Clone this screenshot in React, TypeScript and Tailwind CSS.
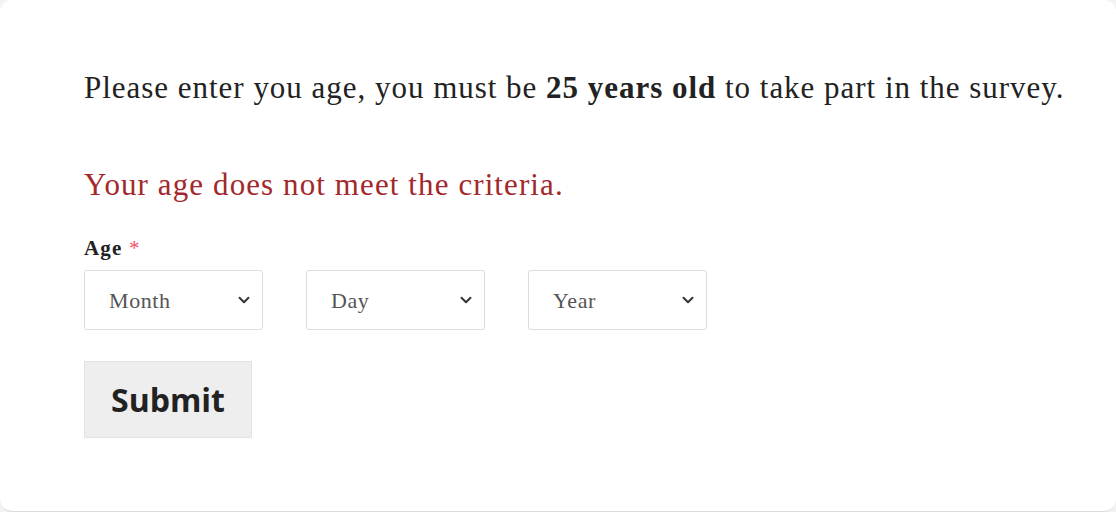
import { ChevronDown } from "lucide-react"

const serif = { fontFamily: '"Liberation Serif", "Times New Roman", serif' }

function DateSelect({ label }: { label: string }) {
  return (
    <div className="w-[179px] h-[60px] border border-[#dcdcdc] rounded-[3px] bg-white flex items-center pl-[24px] pr-[9px]">
      <span className="flex-1 text-[22px] tracking-[0.6px] text-[#555]" style={serif}>
        {label}
      </span>
      <ChevronDown className="w-[18px] h-[18px] text-[#333]" strokeWidth={2.6} />
    </div>
  )
}

export default function App() {
  return (
    <div className="w-[1116px] h-[512px] bg-[#f3f3f3]">
      <div className="w-full h-full bg-white rounded-[12px] border-b border-[#dcdcdc] pl-[84px] pt-[68px]" style={serif}>
        <p className="text-[31px] leading-[40px] text-[#222] tracking-[0.98px]">
          Please enter you age, you must be <b>25 years old</b> to take part in the survey.
        </p>
        <p className="mt-[57px] text-[31px] leading-[40px] text-[#a3282b] tracking-[1.1px]">
          Your age does not meet the criteria.
        </p>
        <div className="mt-[31px] text-[21px] leading-[24px] font-bold text-[#222] tracking-[1.2px]">
          Age <span className="text-[#f0506e] font-normal">*</span>
        </div>
        <div className="mt-[10px] flex gap-[43px]">
          <DateSelect label="Month" />
          <DateSelect label="Day" />
          <DateSelect label="Year" />
        </div>
        <button
          className="mt-[31px] w-[168px] h-[77px] bg-[#eeeeee] border border-[#e3e3e3] text-[32px] font-bold text-[#222]"
          style={{ fontFamily: '"Open Sans", "Noto Sans", sans-serif' }}
        >
          Submit
        </button>
      </div>
    </div>
  )
}
